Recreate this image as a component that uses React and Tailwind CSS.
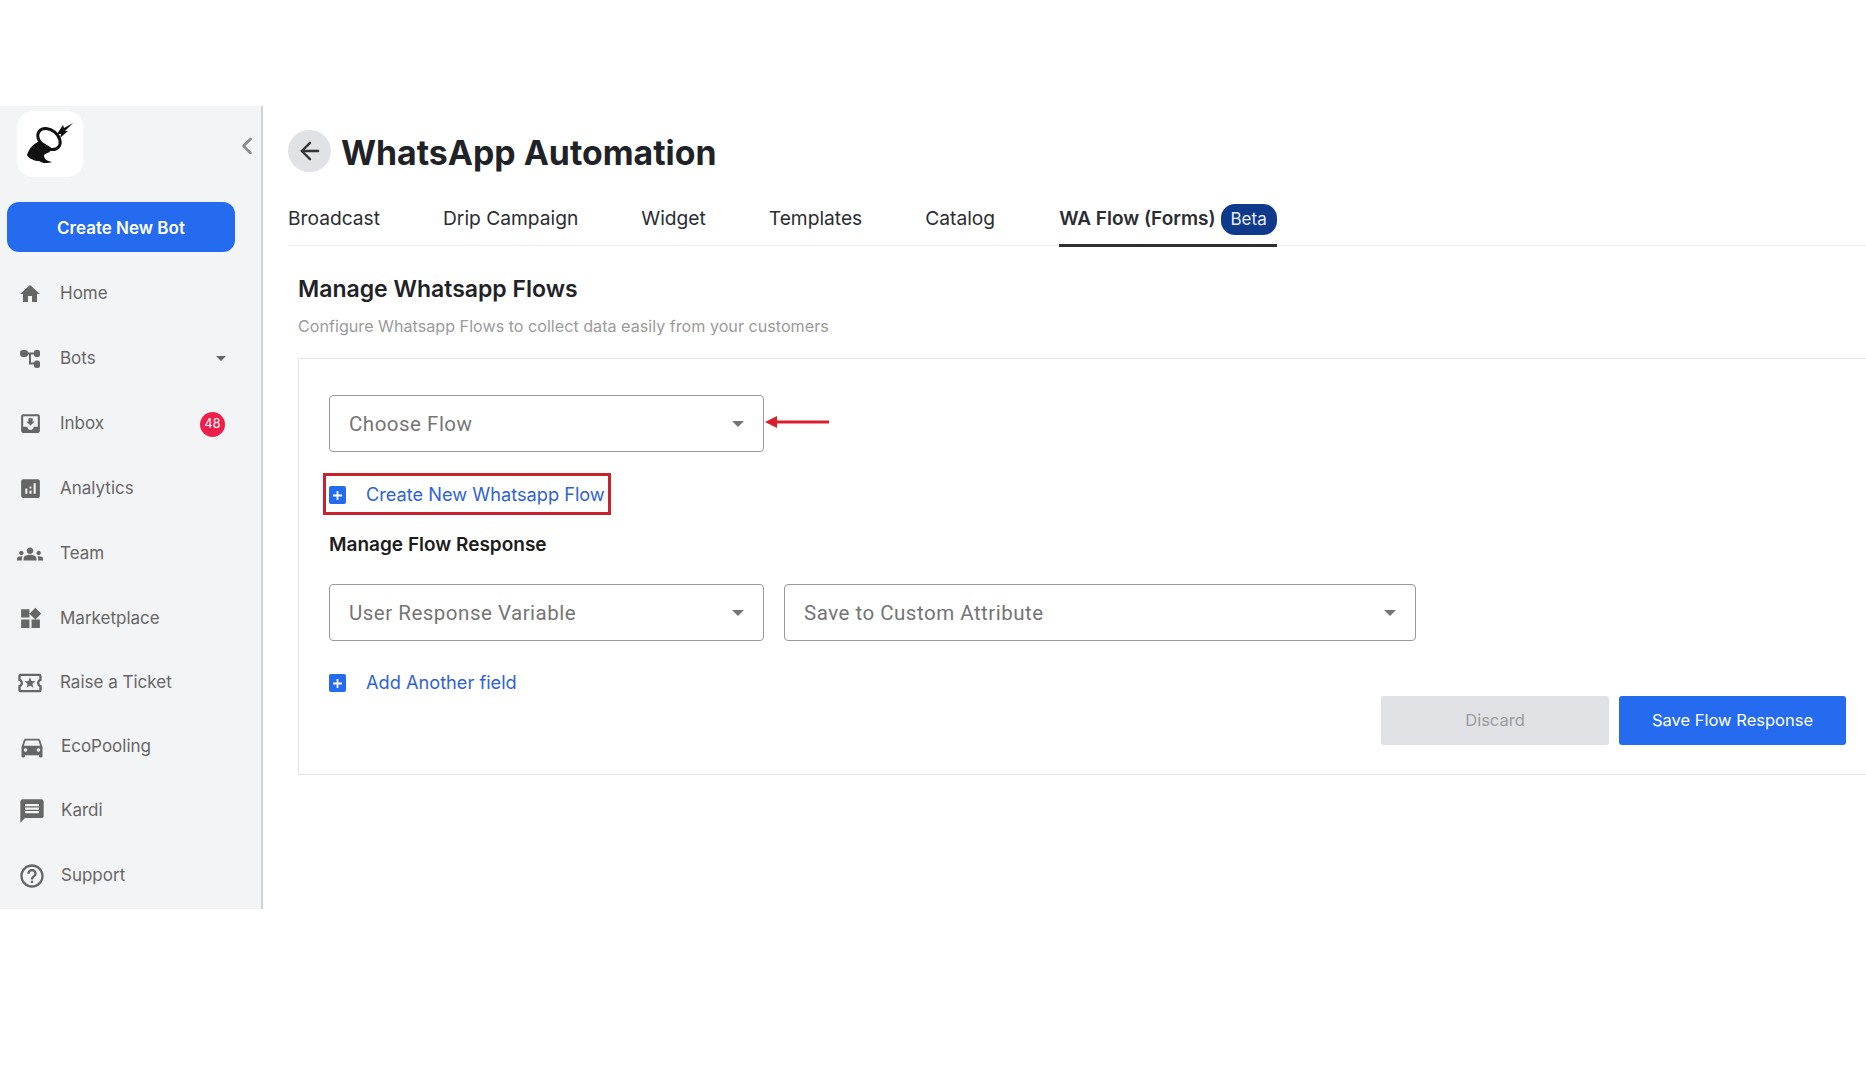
import { ArrowLeft, ChevronLeft } from "lucide-react";
import {
  MdHome,
  MdMoveToInbox,
  MdAnalytics,
  MdGroups,
  MdWidgets,
  MdOutlineLocalActivity,
  MdDirectionsCar,
  MdMessage,
  MdHelpOutline,
} from "react-icons/md";

const BotsIcon = () => (
  <svg width="24" height="24" viewBox="0 0 24 24" fill="#666">
    <rect x="2" y="3" width="8" height="7" rx="3" />
    <rect x="16" y="3" width="6" height="7" rx="2" />
    <rect x="16" y="13.5" width="6" height="7.5" rx="2.5" />
    <path d="M9 5.5h8v2h-4v8h4v2h-6V7.5H9z" />
  </svg>
);

const Logo = () => (
  <svg width="66" height="66" viewBox="0 0 66 66">
    <path d="M10 44c2-7 8-13 14-14 3 3 8 4 11 8-2 4-6 4-8 6 0 4 3 6 8 7-6 2-10 1-13-1-4 0-10-2-12-6z" fill="#111" />
    <ellipse cx="32" cy="28" rx="12.5" ry="9" transform="rotate(40 32 28)" fill="none" stroke="#111" strokeWidth="3" />
    <path d="M56 12l-9 5-1-3-6 9h4l-1 4 8-7h-3z" fill="#111" />
  </svg>
);

const NAV = [
  { label: "Home", icon: <MdHome size={24} />, h: "h-[65px]" },
  { label: "Bots", icon: <BotsIcon />, caret: true, h: "h-[65px]" },
  { label: "Inbox", icon: <MdMoveToInbox size={25} />, badge: "48", h: "h-[65px]" },
  { label: "Analytics", icon: <MdAnalytics size={25} />, h: "h-[65px]" },
  { label: "Team", icon: <MdGroups size={26} />, h: "h-[65px]" },
  { label: "Marketplace", icon: <MdWidgets size={25} />, h: "h-[65px]" },
  { label: "Raise a Ticket", icon: <MdOutlineLocalActivity size={30} />, h: "h-[64px]" },
  { label: "EcoPooling", icon: <MdDirectionsCar size={28} />, h: "h-[64px]", gap: true },
  { label: "Kardi", icon: <MdMessage size={28} />, h: "h-[64px]", gap: true },
  { label: "Support", icon: <MdHelpOutline size={28} />, h: "h-[65px]", gap: true },
];

const TABS = ["Broadcast", "Drip Campaign", "Widget", "Templates", "Catalog"];

function Caret() {
  return <span className="w-0 h-0 border-x-[6px] border-x-transparent border-t-[6px] border-t-[#757575]" />;
}

function SelectBox({ label, className = "" }) {
  return (
    <div className={`flex items-center justify-between h-[57px] px-[19px] bg-white border border-[#9a9a9a] rounded-[4px] ${className}`}>
      <span className="pt-[2px] text-[20.5px] tracking-[0.5px] text-[#757575] font-['Roboto',sans-serif]">{label}</span>
      <Caret />
    </div>
  );
}

function PlusLink({ label }) {
  return (
    <div className="flex items-center gap-[20px] h-[24px]">
      <span className="flex items-center justify-center w-[17px] h-[18px] rounded-[2px] bg-[#246bef]">
        <svg width="11" height="11" viewBox="0 0 11 11">
          <path d="M5.5 1v9M1 5.5h9" stroke="#fff" strokeWidth="1.8" />
        </svg>
      </span>
      <span className="text-[18.2px] text-[#2f62d8]">{label}</span>
    </div>
  );
}

export default function App() {
  return (
    <div className="pt-[106px] bg-white min-h-[1080px] overflow-hidden font-['Inter',sans-serif] flex items-start">
      {/* ── Sidebar ─────────────────────────────── */}
      <aside className="w-[263px] h-[803px] shrink-0 bg-[#f3f4f6] border-r-2 border-[#cfd1d6]">
        <div className="flex items-center justify-between pl-[17px] pt-[5px]">
          <div className="w-[66px] h-[66px] rounded-[16px] bg-white">
            <Logo />
          </div>
          <ChevronLeft size={28} strokeWidth={2.2} className="text-[#8a8a8a] mt-[4px]" />
        </div>
        <button className="block ml-[7px] mt-[25px] w-[228px] h-[50px] pt-[3px] rounded-[12px] bg-[#246bef] text-white text-[17px] font-semibold">
          Create New Bot
        </button>
        <nav className="mt-[9px]">
          {NAV.map((item) => (
            <div
              key={item.label}
              className={`flex items-center pr-[37px] text-[#666] ${item.gap ? "pl-[18px]" : "pl-[16px]"} ${item.h}`}
            >
              <span className="w-[28px] flex justify-center">{item.icon}</span>
              <span className={`${item.gap ? "ml-[15px]" : "ml-[16px]"} text-[17px] flex-1`}>{item.label}</span>
              {item.caret && (
                <span className="w-0 h-0 mr-[-2px] border-x-[5px] border-x-transparent border-t-[5px] border-t-[#666]" />
              )}
              {item.badge && (
                <span className="w-[25px] h-[25px] mr-[-1px] mt-[2px] rounded-full bg-[#ef1f4b] text-white text-[12.5px] flex items-center justify-center">
                  {item.badge}
                </span>
              )}
            </div>
          ))}
        </nav>
      </aside>

      {/* ── Main ────────────────────────────────── */}
      <main className="flex-1 min-w-0 pl-[25px]">
        <div className="flex items-center gap-[10px] pt-[24px]">
          <span className="w-[43px] h-[42px] rounded-full bg-[#e1e2e6] flex items-center justify-center">
            <ArrowLeft size={28} className="text-[#333]" />
          </span>
          <h1 className="h-[42px] pt-[2px] text-[33.8px] font-bold text-[#1f2328] leading-[42px]">WhatsApp Automation</h1>
        </div>

        <div className="flex items-end h-[74px] border-b border-[#eeeeee]">
          {TABS.map((t) => (
            <span key={t} className="text-[19.2px] text-[#2a2d31] pb-[12px] mr-[63px]">{t}</span>
          ))}
          <span className="ml-[1px] flex items-center gap-[5px] text-[19px] font-semibold text-[#2a2d31] pb-[9px] mb-[-2px] border-b-[3px] border-[#2f2f2f]">
            WA Flow (Forms)
            <span className="w-[56px] h-[31px] rounded-[14px] bg-[#0f3a8c] text-[#e8eefc] text-[17px] font-normal flex items-center justify-center">Beta</span>
          </span>
        </div>

        <div className="pl-[10px]">
          <h2 className="mt-[28px] text-[23px] leading-[30px] font-semibold text-[#1f2328]">Manage Whatsapp Flows</h2>
          <p className="mt-[10px] text-[16.15px] leading-[24px] text-[#9b9b9b]">Configure Whatsapp Flows to collect data easily from your customers</p>

          <div className="mt-[20px] h-[417px] border border-r-0 border-[#e5e5e5] pl-[30px] pr-[20px] pt-[36px]">
            <div className="flex items-center">
              <SelectBox label="Choose Flow" className="w-[435px]" />
              {/* red annotation arrow */}
              <svg width="66" height="14" viewBox="0 0 66 14" className="ml-[1px] mb-[3px]">
                <path d="M0 7 12 1v4.5h52v3H12V13z" fill="#d9202a" />
              </svg>
            </div>
            <div className="relative mt-[31px] w-fit">
              <PlusLink label="Create New Whatsapp Flow" />
              <div className="absolute left-[-6px] right-[-6px] top-[-10px] bottom-[-8px] border-[3px] border-[#c9222c]" />
            </div>
            <h3 className="mt-[24px] text-[19px] leading-[28px] font-semibold text-[#1c1c1c]">Manage Flow Response</h3>
            <div className="flex gap-[20px] mt-[25px]">
              <SelectBox label="User Response Variable" className="w-[435px]" />
              <SelectBox label="Save to Custom Attribute" className="w-[632px]" />
            </div>
            <div className="mt-[30px]">
              <PlusLink label="Add Another field" />
            </div>
            <div className="flex justify-end gap-[10px] mt-[1px]">
              <button className="w-[228px] h-[49px] rounded-[3px] bg-[#e0e1e5] text-[#9b9b9b] text-[16.5px]">Discard</button>
              <button className="w-[227px] h-[49px] rounded-[3px] bg-[#246bef] text-white text-[16.5px]">Save Flow Response</button>
            </div>
          </div>
        </div>
      </main>
    </div>
  );
}
